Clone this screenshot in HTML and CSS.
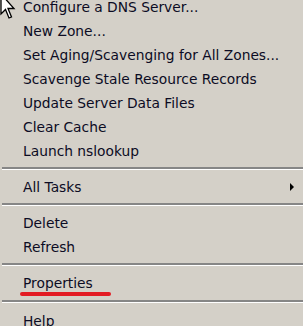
FILE: index.html
```html
<!DOCTYPE html>
<html lang="en">
<head>
  <meta charset="utf-8">
  <title>DNS context menu</title>
  <link rel="stylesheet" href="styles.css">
</head>
<body>
  <div class="menu">
    <div class="item">Configure a DNS Server...</div>
    <div class="item">New Zone...</div>
    <div class="item">Set Aging/Scavenging for All Zones...</div>
    <div class="item">Scavenge Stale Resource Records</div>
    <div class="item">Update Server Data Files</div>
    <div class="item">Clear Cache</div>
    <div class="item">Launch nslookup</div>
    <div class="sep"></div>
    <div class="item sub">All Tasks <span class="arrow"></span></div>
    <div class="sep"></div>
    <div class="item">Delete</div>
    <div class="item">Refresh</div>
    <div class="sep"></div>
    <div class="item marked">Properties</div>
    <div class="sep last"></div>
    <div class="item">Help</div>
  </div>

  <svg class="cursor" width="16" height="22" viewBox="0 0 16 22">
    <path d="M1 -6 L1 14 L5.5 9.5 L9 18 L11.5 17 L8 8.5 L14 8.5 Z" fill="#fff" stroke="#000" stroke-width="1.3" stroke-linejoin="miter"/>
  </svg>
</body>
</html>
```

FILE: styles.css
```css
html, body{
  margin: 0;
  padding: 0;
  background: #d4d0c8;
  overflow: hidden;
}
body{
  height: 326px;
}
.menu{
  margin-top: -5px;
  padding-left: 2px;
  font-family: "DejaVu Sans", Verdana, sans-serif;
  font-size: 13.8px;
  color: #0c0c24;
}
.item{
  height: 24px;
  line-height: 24px;
  padding-left: 21px;
  white-space: nowrap;
  position: relative;
}
.arrow{
  position: absolute;
  right: 9px;
  top: 8px;
  width: 0;
  height: 0;
  border-top: 4px solid transparent;
  border-bottom: 4px solid transparent;
  border-left: 4px solid #000;
}
.sep{
  margin: 4px 0 5px;
  border-top: 2px solid #868686;
  border-bottom: 1px solid #fff;
}
.sep.last{
  margin-top: 5px;
  margin-bottom: 6px;
}
.marked::after{
  content: "";
  position: absolute;
  left: 18px;
  top: 21px;
  width: 91px;
  height: 4px;
  border-radius: 2px;
  background: #e31b23;
}
.cursor{
  position: absolute;
  left: 0;
  top: 0;
}
```
